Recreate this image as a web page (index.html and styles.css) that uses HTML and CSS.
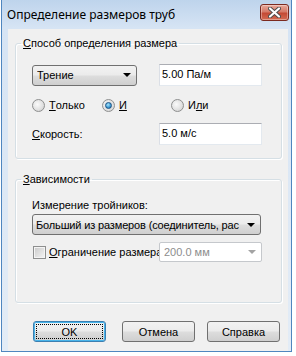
FILE: index.html
```html
<!DOCTYPE html>
<html lang="ru">
<head>
  <meta charset="UTF-8" />
  <title>Определение размеров труб</title>
  <link rel="stylesheet" href="styles.css">
</head>
<body>
  <div class="window">
    <div class="titlebar">
      <span class="title">Определение размеров труб</span>
      <button class="close" title="Закрыть">
        <svg width="13" height="11" viewBox="0 0 13 11">
          <path d="M2 1.5 L11 9.5 M11 1.5 L2 9.5" stroke="#4a4a4a" stroke-width="4" stroke-linecap="round" />
          <path d="M2 1.5 L11 9.5 M11 1.5 L2 9.5" stroke="#fff" stroke-width="2.2" stroke-linecap="round" />
        </svg>
      </button>
    </div>

    <div class="client">
      <fieldset class="group method">
        <legend><u>С</u>пособ определения размера</legend>
        <div class="row">
          <div class="combo small"><span>Трение</span><i class="arrow"></i></div>
          <div class="field">5.00 Па/м</div>
        </div>
        <div class="radios">
          <label class="radio first"><span class="dot"></span><u>Т</u>олько</label>
          <label class="radio second"><span class="dot on"></span><u>И</u></label>
          <label class="radio"><span class="dot"></span>И<u>л</u>и</label>
        </div>
        <div class="row speed">
          <span class="label"><u>С</u>корость:</span>
          <div class="field">5.0 м/с</div>
        </div>
      </fieldset>

      <fieldset class="group depends">
        <legend><u>З</u>ависимости</legend>
        <div class="label tees">Измерение тройников:</div>
        <div class="combo wide"><span>Больший из размеров (соединитель, рас</span><i class="arrow"></i></div>
        <div class="row limit">
          <label class="check"><span class="box"></span><u>О</u>граничение размера</label>
          <div class="combo disabled"><span>200.0 мм</span><i class="arrow"></i></div>
        </div>
      </fieldset>

      <div class="buttons">
        <button class="btn default">OK</button>
        <button class="btn cancel">Отмена</button>
        <button class="btn help">Справка</button>
      </div>
    </div>
  </div>
</body>
</html>
```

FILE: styles.css
```css
body {
  margin: 0;
  background: #ffffff;
  font-family: "Liberation Sans", Arial, sans-serif;
  font-size: 11px;
  color: #000;
}

.window {
  width: 280px;
  height: 351px;
  margin-left: 1px;
  border: 1px solid #4f86bf;
  border-top: none;
  background: linear-gradient(#bed4ec, #d6e4f4 28px, #e3ecf6);
  padding: 0 3px 0 6px;
  display: flex;
  flex-direction: column;
}

.titlebar {
  height: 29px;
  display: flex;
  align-items: center;
  justify-content: space-between;
  margin-left: -6px;
  padding-left: 5px;
}

.title {
  font-family: "Noto Sans", "Open Sans", sans-serif;
  font-size: 12px;
  color: #000;
  margin-top: -1px;
}

.close {
  width: 29px;
  height: 17px;
  margin: -4px -1px 0 0;
  padding: 0;
  border: 1px solid #7b2a20;
  border-radius: 3px;
  background: linear-gradient(#e9a99b, #d57a68 45%, #c44a35 55%, #d46c53);
  box-shadow: inset 0 0 0 1px rgba(255, 255, 255, 0.35);
  display: flex;
  align-items: center;
  justify-content: center;
}

.client {
  flex: 1;
  width: 280px;
  background: #f0f0f0;
  padding: 7px 6px 0 7px;
  box-sizing: border-box;
  display: flex;
  flex-direction: column;
}

.group {
  margin: 0;
  border: 1px solid #d5dfe5;
  border-radius: 3px;
  box-shadow: inset 1px 1px #fff, 1px 1px #fff;
  min-width: 0;
}

.group legend {
  margin-left: -11px;
  padding: 0 2px;
  line-height: 14px;
}

.method {
  padding: 14px 0 13px 16px;
}

.depends {
  margin-top: 13px;
  padding: 12px 0 40px 16px;
}

.row {
  display: grid;
  grid-template-columns: 127px 103px;
  align-items: center;
  height: 22px;
}

.field {
  height: 22px;
  box-sizing: border-box;
  background: #fff;
  border: 1px solid #e3e9ef;
  border-top-color: #abadb3;
  border-left-color: #dbdfe6;
  padding: 3px 2px 0;
  white-space: nowrap;
}

.combo {
  height: 21px;
  box-sizing: border-box;
  display: flex;
  align-items: center;
  justify-content: space-between;
  padding: 0 5px 0 4px;
  border: 1px solid #707070;
  border-radius: 3px;
  background: linear-gradient(#f2f2f2, #ebebeb 48%, #dddddd 52%, #cfcfcf);
  white-space: nowrap;
  overflow: hidden;
}

.combo span {
  overflow: hidden;
}

.arrow {
  flex: none;
  width: 0;
  height: 0;
  border-left: 4px solid transparent;
  border-right: 4px solid transparent;
  border-top: 4px solid #000;
  margin-left: 6px;
}

.combo.small {
  width: 105px;
}

.combo.wide {
  width: 229px;
  margin-top: 2px;
  padding-left: 3px;
  letter-spacing: -0.15px;
}

.combo.wide .arrow {
  margin-left: 3px;
}

.combo.disabled {
  height: 20px;
  background: #fff;
  border-color: #c5c8cc;
  border-radius: 2px;
  color: #8d8d8d;
}

.combo.disabled .arrow {
  border-top-color: #a3a3a3;
}

.radios {
  display: flex;
  align-items: center;
  height: 16px;
  margin-top: 11px;
}

.radio {
  display: flex;
  align-items: center;
}

.radio.first {
  width: 70px;
}

.radio.second {
  width: 69px;
}

.dot {
  width: 11px;
  height: 11px;
  margin-right: 4px;
  border: 1px solid #8e8f8f;
  border-radius: 50%;
  background: radial-gradient(circle at 40% 40%, #fafafa, #e2e2e2 55%, #c9c9c9);
  display: flex;
  align-items: center;
  justify-content: center;
}

.dot.on::after {
  content: "";
  width: 5px;
  height: 5px;
  border-radius: 50%;
  border: 1px solid #1c5283;
  background: radial-gradient(circle at 40% 35%, #a8e4fb, #3a98d2 60%, #1a5e9a);
}

.speed {
  margin-top: 10px;
}

.tees {
  height: 14px;
  line-height: 14px;
}

.limit {
  margin-top: 7px;
  height: 20px;
}

.check {
  display: flex;
  align-items: center;
  white-space: nowrap;
  overflow: hidden;
  padding-left: 1px;
}

.box {
  flex: none;
  width: 11px;
  height: 11px;
  margin-right: 3px;
  border: 1px solid #8e8f8f;
  background: linear-gradient(135deg, #c9c9c9, #f5f5f5);
  box-shadow: inset 0 0 0 1px #f4f4f4;
}

.buttons {
  display: flex;
  margin-top: 18px;
  padding-left: 18px;
}

.btn {
  width: 73px;
  height: 21px;
  padding: 0;
  font: inherit;
  color: #000;
  border: 1px solid #707070;
  border-radius: 3px;
  background: linear-gradient(#f2f2f2, #ebebeb 48%, #dddddd 52%, #cfcfcf);
}

.btn.default {
  border-color: #3c7fb1;
  box-shadow: inset 0 0 0 1px #48b4ea;
  outline: 1px dotted #000;
  outline-offset: -4px;
}

.btn.cancel {
  margin-left: 16px;
}

.btn.help {
  margin-left: 12px;
}
```
